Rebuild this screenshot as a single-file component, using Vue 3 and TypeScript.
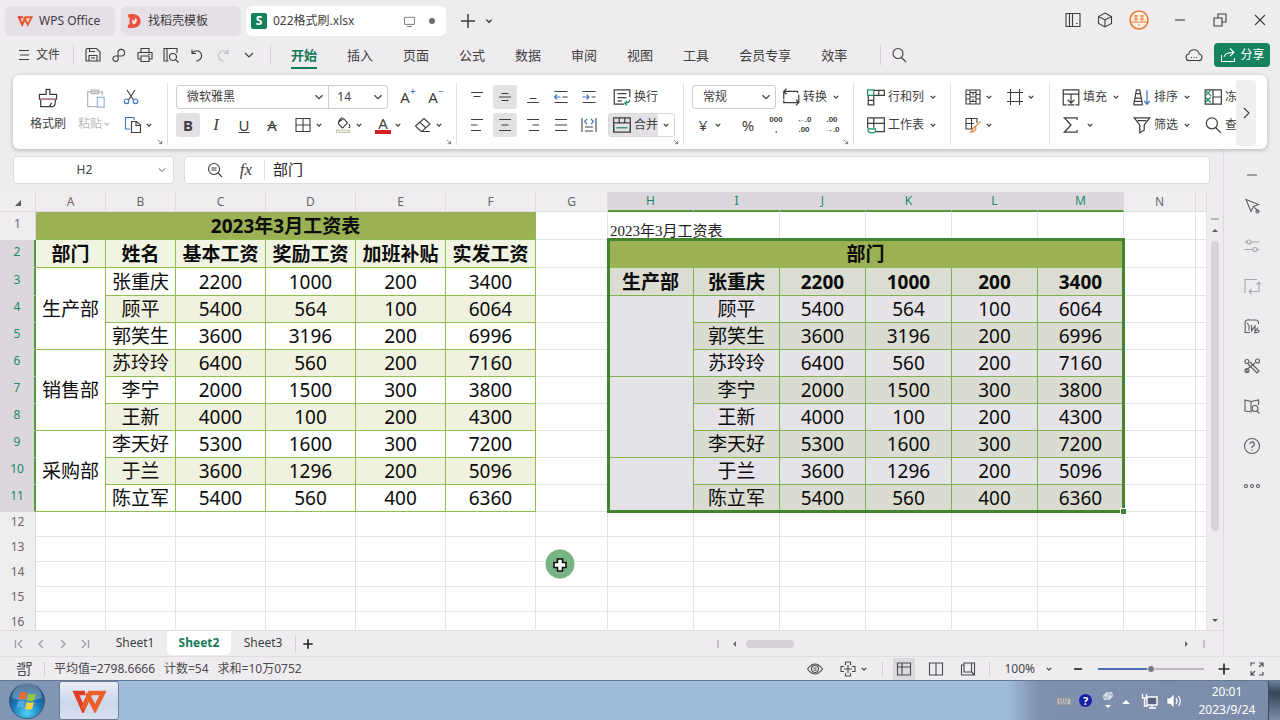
<script setup lang="ts">
import { h, ref } from 'vue'

type Shape = [d: string, stroke?: string, fill?: string]

const BLUE = '#3f74c4'
const TEAL = '#1b8a68'
const ORANGE = '#e08a45'

const icons: Record<string, Shape[]> = {
  menu: [['M4 4.500H14M5 9H14M4 13.500H14']],
  save: [['M2 3.500V15H16V6L12.500 2.500H3.500Q2 2.500 2 4M5 15V9.500H13V15M5.500 2.500V5.500H11M7 12H11']],
  export: [['M8 10H11.500A3.300 3.300 0 1 0 8 6.500V11.500A2.700 2.700 0 1 1 5.200 10H8']],
  print: [['M5 6V2.500H13V6M4.500 13H2V6.500H16V13H13.500M5 10H13V15.500H5ZM12 8.200H14']],
  preview: [['M6.500 15H2V2.500H15V7M2 2.500H5V15'], ['M11 7.500A3.500 3.500 0 1 0 11 14.500A3.500 3.500 0 1 0 11 7.500M13.500 13.500L16.500 16.500']],
  undo: [['M4 3.500V7.500H8M4.300 7.200A5 5 0 1 1 10 14.500L8.500 15.500']],
  redo: [['M14 3.500V7.500H10M13.700 7.200A5 5 0 1 0 8 14.500L9.500 15.500']],
  down: [['M5 7L9 11L13 7']],
  search: [['M8 2.500A5 5 0 1 0 8 12.500A5 5 0 1 0 8 2.500M11.500 11.500L16 16']],
  cloud: [['M5 14.500A3.300 3.300 0 0 1 3.800 8A5.300 5.300 0 0 1 14.200 8A3.300 3.300 0 0 1 13 14.500ZM6 11.500H7M8.600 11.500H9.600M11.200 11.500H12.200']],
  share: [['M2.500 9V15.500H15.500V12M5 11Q6 6.500 14 6.500M11 2.500L15 6.500L11 10.200']],
  monitor: [['M3 4H15V12.500H3ZM6 15H12']],
  plus: [['M2 9H16M9 2V16']],
  columns: [['M8.500 2.500H2V15.500H8.500M5.500 2.500V15.500M8.500 2.500H16V15.500H8.500ZM12 12.500H13.500']],
  cube: [['M9 2L15.500 5.500V12.500L9 16L2.500 12.500V5.500ZM2.500 5.500L9 9L15.500 5.500M9 9V16']],
  minimize: [['M4 9H14']],
  restore: [['M3 7H11V15H3ZM7 7V3H15V11H11']],
  close: [['M4 4L14 14M14 4L4 14']],
  brush: [['M7.500 6V2H10.500V6H16V10H2V6ZM3 10V16H13Q15.500 15 15 10M10 16L12 13'], ['M2.500 9.800H15.500', '#d39a9a']],
  paste: [['M11 16H3V4H15V7M6 2.500H12V5.500H6Z'], ['M11 8.500H16.500V16.500H11Z', '#9db4d6']],
  cut: [['M5 2L11.500 12M13 2L6.500 12'], ['M4.500 11A2.300 2.300 0 1 0 4.500 15.600A2.300 2.300 0 1 0 4.500 11M13.500 11A2.300 2.300 0 1 0 13.500 15.600A2.300 2.300 0 1 0 13.500 11', BLUE]],
  copy: [['M6 13H1.500V1.500H10V4', BLUE], ['M7.500 5.500H12.500L16.500 9V16.500H7.500ZM12 6V9.500H16']],
  borders: [['M2 2.500H16V15.500H2ZM9 2.500V15.500M2 9H16']],
  fill: [['M5 6L9.500 2.500L13.500 7L8.500 12L4.500 8Q4 4.500 8 1.500M15 8Q17 12 14.500 11.500'], ['M2.500 14H15.500V16.500H2.500Z', '#c9c6ae', '#efeedd']],
  eraser: [['M1.500 10L10 2.500L16 8L8.500 15H6.500ZM6 6.300L12 12M7 15.500H16']],
  valignTop: [['M3 4.500H15M5.500 8.500H12.500']],
  valignMid: [['M5.500 5.500H12.500M3 9H15M5.500 12.500H12.500']],
  valignBot: [['M5.500 10.500H12.500M3 14.500H15']],
  outdent: [['M2.500 3.500H15.500M10.500 9H15.500M2.500 14.500H15.500'], ['M2.500 9H8.500M5 6.500L2.500 9L5 11.500', BLUE]],
  indent: [['M2.500 3.500H15.500M11.500 9H15.500M2.500 14.500H15.500'], ['M2.500 9H9M6.500 6.500L9 9L6.500 11.500', BLUE]],
  left: [['M3 3.500H15M3 9H9.500M3 14.500H13']],
  center: [['M3 3.500H15M5.500 9H12.500M3 14.500H15']],
  right: [['M3 3.500H15M8.500 9H15M5 14.500H15']],
  justify: [['M3 3.500H15M3 9H15M3 14.500H15']],
  spread: [['M2 2V16M16 2V16M5 11H13M5 15H13'], ['M7 3L4.500 5.500L7 8M11 3L13.500 5.500L11 8', BLUE]],
  wrap: [['M11 15.500H2V2.500H16V9M5 6H13M5 9.500H13M5 12.500H9'], ['M16 11.500Q16 14.500 11.500 14.500M13.500 12.500L11.500 14.500L13.500 16.500', TEAL]],
  merge: [['M1.500 2.500H16.500V15.500H1.500ZM1.500 7H16.500M6.500 2.500V7M11.500 2.500V7'], ['M4 11.500H14', TEAL], ['M1.500 15.500V9M16.500 15.500V9']],
  convert: [['M2.500 11V4H15M5 1.500L2.500 4L5 6.500M16 7V14H3.500M13.500 11.500L16 14L13.500 16.500M2.500 12V14H5M15 4V5.500']],
  rowcol: [['M7 3H16.500V7.500H7M11.500 3V7.500'], ['M2 7.500V16H7V7.500M2 12H7'], ['M1.500 2.500H7V7.500H1.500Z', TEAL]],
  sheet: [['M1.500 2.500H16.500V15H9M1.500 2.500V12M1.500 7.500H16.500M7 2.500V11.500'], ['M2 12.500H8.500V15Q5.500 17 2 15Z', TEAL]],
  cells: [['M2 2H16V16H2ZM6 2V16M12 2V16M2 6.500H6M2 11H6M12 6.500H16M12 11H16M6 4.500H12M6 13.500H12M9 4.500V7M9 11V13.500M6 9H12']],
  frame: [['M4.500 1V17M13.500 1V17M1 4.500H17M1 13.500H17']],
  format: [['M9 13H2V2.500H13V7M2 7.500H10M7.500 2.500V13'], ['M16.500 5.500L10.500 11.500', ORANGE], ['M10 11Q13 11 11.500 14Q10 16.500 6.500 16Q9 14.500 8.500 13Q8.500 11.500 10 11', ORANGE, '#f6cda6']],
  fillDown: [['M5 16H2V2.500H16V16H13M2 6.500H16M9 6.500V14M6 11.500L9 14.500L12 11.500M6 16H12']],
  sort: [['M1.500 16L4 2.500H7L9.500 16M3 10H8M1.500 16H9.500M4 6H7.500M2.500 13H8.500'], ['M13.500 3V15M11 12.500L13.500 15.500L16 12.500', BLUE]],
  sigma: [['M14.500 4.500V2.500H3L9 9L3 15.500H14.500V13.500']],
  funnel: [['M2 2.500H16L11 9V13.500L7 16V9ZM5 5H13']],
  freeze: [['M2 2.500H16.500V15.500H2ZM9 2.500V15.500M9 9H16.500'], ['M2 3L7 8M2 9L7 14M7 3L2 8M7 9L2 14', TEAL]],
  chevR: [['M7 4L12 9L7 14']],
  zoomOut: [['M8 2.500A5.500 5.500 0 1 0 8 13.500A5.500 5.500 0 1 0 8 2.500M12 12L16 16M5.500 7H10.500M5.500 9H10.500']],
  launcher: [['M5 5L12 12M12 7V12H7']],
  cursor: [['M3 2.500L15.500 7.500L10.500 9.500L8 14.500ZM11.500 10.500L15.500 14.500'], ['M14.500 13A1.500 1.500 0 1 0 14.500 16A1.500 1.500 0 1 0 14.500 13']],
  sliders: [['M1.500 5H4M8 5H16.500M1.500 12.500H10M14 12.500H16.500'], ['M6 3A2 2 0 1 0 6 7A2 2 0 1 0 6 3M12 10.500A2 2 0 1 0 12 14.500A2 2 0 1 0 12 10.500']],
  swap: [['M2 16V2.500H14M16 5V14.500H6M8.500 12L6 14.500L8.500 17M13.500 7.500L16 5L18 7.500']],
  chart: [['M6 2.500Q1.500 3 2 7Q2.500 9 2 15.500H7M4 6L6 8.500V13.500M5 3H13Q16 3.500 15.500 7'], ['M8.500 8V14L12 9V14.500L15 10.500M11 16L16 15M13.500 12L16.500 14.500']],
  tools: [['M5 7L14 16L16 14L7 5M12 6L3 13L5 15'], ['M4 2.500A2 2 0 1 0 4 6.500A2 2 0 1 0 4 2.500M14.500 2A2 2 0 1 0 14.500 6A2 2 0 1 0 14.500 2M4 11.500A2 2 0 1 0 4 15.500A2 2 0 1 0 4 11.500']],
  manual: [['M9 15L2 14V3L8 4.500L15.500 3V8M8 4.500V14'], ['M12 8.500A3 3 0 1 0 12 14.500A3 3 0 1 0 12 8.500M14 14L16.500 16.500']],
  help: [['M9 1.500A7.500 7.500 0 1 0 9 16.500A7.500 7.500 0 1 0 9 1.500M6.700 7A2.300 2.300 0 1 1 9 9.500V11M9 12.500V13.800']],
  dots: [['M3 7.500A1.500 1.500 0 1 0 3 10.500A1.500 1.500 0 1 0 3 7.500M9 7.500A1.500 1.500 0 1 0 9 10.500A1.500 1.500 0 1 0 9 7.500M15 7.500A1.500 1.500 0 1 0 15 10.500A1.500 1.500 0 1 0 15 7.500']],
  first: [['M4.500 4V14M13 4L8 9L13 14']],
  prev: [['M11.500 4L6.500 9L11.500 14']],
  next: [['M6.500 4L11.500 9L6.500 14']],
  last: [['M5 4L10 9L5 14M13.500 4V14']],
  record: [['M3 3.500H5V6.500H2M10 3H7V5H9.500V7H6.500M12 8V2.500H16V5.500H12M14 5.500V15.500H12M2 9H10M4 11.500H10V15.500H4Z']],
  eye: [['M1.500 9Q9 -1 16.500 9Q9 19 1.500 9ZM9 5.500A3.500 3.500 0 1 0 9 12.500A3.500 3.500 0 1 0 9 5.500M7.500 8H10.500M7.500 10H10.500']],
  move: [['M6.500 5V2H11.500V5M6.500 13V16H11.500V13M5 6.500H2V11.500H5M13 6.500H16V11.500H13M9 5V13M5 9H13']],
  normal: [['M2.500 3H15.500V15H2.500ZM2.500 7H15.500M7 3V15']],
  page: [['M2.500 3H15.500V15H2.500ZM9 3V15']],
  reading: [['M5 3H12.500V12H5ZM5 5H2.500V15H15.500V3H12.500M12.500 12L15 14.500']],
  expand: [['M11 3H15V7M15 3L11 7M7 3H3V6M3 11V15H7M3 15L7 11M11 15H15V12']],
}

const Icon = (props: { n: string }) =>
  h(
    'svg',
    { class: 'icon', viewBox: '0 0 18 18', 'aria-hidden': 'true' },
    icons[props.n].map(([d, stroke, fill]) => h('path', { d, stroke: stroke ?? 'currentColor', fill: fill ?? 'none' })),
  )
Icon.props = ['n']

const quick = [
  ['save', '保存'], ['export', '输出'], ['print', '打印'], ['preview', '打印预览'],
  ['undo', '撤销'], ['redo', '恢复'], ['down', '更多'],
]
const menus = ['开始', '插入', '页面', '公式', '数据', '审阅', '视图', '工具', '会员专享', '效率']
const side = ['cursor', 'sliders', 'swap', 'chart', 'tools', 'manual', 'help', 'dots']
const sheets = ['Sheet1', 'Sheet2', 'Sheet3']
const sheetNav = ['first', 'prev', 'next', 'last']
const activeSheet = ref('Sheet2')
const formula = ref('部门')
const address = ref('H2')
const zoomLevel = ref(100)

const columns = 'ABCDEFGHIJKLMN'.split('')
const isPicked = (c: string) => c >= 'H' && c <= 'M'

interface Cell { text?: string; cls?: string; cols?: number; rows?: number }

const people = [
  ['生产部', '张重庆', '2200', '1000', '200', '3400'],
  ['', '顾平', '5400', '564', '100', '6064'],
  ['', '郭笑生', '3600', '3196', '200', '6996'],
  ['销售部', '苏玲玲', '6400', '560', '200', '7160'],
  ['', '李宁', '2000', '1500', '300', '3800'],
  ['', '王新', '4000', '100', '200', '4300'],
  ['采购部', '李天好', '5300', '1600', '300', '7200'],
  ['', '于兰', '3600', '1296', '200', '5096'],
  ['', '陈立军', '5400', '560', '400', '6360'],
]
const mergedH: Record<number, number> = { 1: 3, 4: 3, 7: 2 }
const blanks = (n: number): Cell[] => Array.from({ length: n }, () => ({}))

const rows: Cell[][] = [
  [{ text: '2023年3月工资表', cls: 'data title', cols: 6 }, {}, { text: '2023年3月工资表', cls: 'plain', cols: 2 }, ...blanks(6)],
  [
    ...['部门', '姓名', '基本工资', '奖励工资', '加班补贴', '实发工资'].map((text) => ({ text, cls: 'data head' })),
    {}, { text: '部门', cls: 'data title', cols: 6 }, ...blanks(2),
  ],
  ...people.map((p, i) => {
    const line: Cell[] = []
    if (p[0]) line.push({ text: p[0], cls: 'data', rows: 3 })
    p.slice(1).forEach((text) => line.push({ text, cls: i % 2 ? 'data band' : 'data' }))
    line.push({})
    if (i === 0) line.push({ text: p[0], cls: 'data sel selhead' })
    if (mergedH[i]) line.push({ cls: 'data sel', rows: mergedH[i] })
    p.slice(1).forEach((text) =>
      line.push({ text, cls: 'data sel' + (i === 0 ? ' selhead' : i % 2 ? '' : ' selband') }))
    return [...line, ...blanks(2)]
  }),
  ...Array.from({ length: 5 }, () => blanks(15)),
]
const rowClass = (n: number) => (n > 11 ? 'short' : n < 4 ? 'tall' : 'mid')
</script>

<template>
  <div class="desktop">
    <header class="titlebar">
      <button class="doc-tab home">
        <svg class="logo" viewBox="0 0 34 24" aria-hidden="true">
          <path d="M13 4H4L11 20L18 4" fill="none" stroke="#dd3e25" stroke-width="4" />
          <path d="M15 4L23 20L31 4H18L11 20" fill="none" stroke="#ea5a2c" stroke-width="4" />
        </svg>
        <span>WPS Office</span>
      </button>
      <button class="doc-tab store">
        <svg class="logo" viewBox="0 0 18 18" aria-hidden="true">
          <path d="M3 1H8Q16.500 2 16.500 9T8 17H2V14L4 12V6L2 4Z" fill="#e8523f" />
          <path d="M9 13Q6 11 7 7L9 9L11 5Q14 10 9 13" fill="#ffe6dc" />
        </svg>
        <span>找稻壳模板</span>
      </button>
      <button class="doc-tab current">
        <span class="s-logo">S</span>
        <span class="doc-name">022格式刷.xlsx</span>
        <Icon n="monitor" /><i class="unsaved"></i>
      </button>
      <button class="bare add" aria-label="新建"><Icon n="plus" /></button>
      <button class="bare more" aria-label="标签列表"><Icon n="down" /></button>
      <div class="win">
        <button class="bare w32" aria-label="分屏"><Icon n="columns" /></button>
        <button class="bare w32" aria-label="应用"><Icon n="cube" /></button>
        <button class="bare w32 avatar" aria-label="账号">
          <svg viewBox="0 0 20 20" aria-hidden="true">
            <circle cx="10" cy="10" r="9" fill="#fff1e4" stroke="#ea7a35" stroke-width="1.500" />
            <path d="M1 12H19" stroke="#ea7a35" /><path d="M5 6H9M5 9H9M7 5V11M11 6H15M11 9H15M13 5V11M9 15H11" stroke="#ea7a35" />
          </svg>
        </button>
        <button class="bare w40" aria-label="最小化"><Icon n="minimize" /></button>
        <button class="bare w40" aria-label="还原"><Icon n="restore" /></button>
        <button class="bare w40" aria-label="关闭"><Icon n="close" /></button>
      </div>
    </header>

    <nav class="menubar">
      <button class="bare file"><Icon n="menu" /><span>文件</span></button>
      <i class="rule"></i>
      <div class="quick">
        <button v-for="q in quick" :key="q[0]" class="bare" :class="q[0]" :aria-label="q[1]"><Icon :n="q[0]" /></button>
      </div>
      <i class="rule"></i>
      <div class="menus">
        <button v-for="m in menus" :key="m" class="bare" :class="{ on: m === '开始' }"><span>{{ m }}</span></button>
      </div>
      <i class="rule"></i>
      <button class="bare find" aria-label="搜索"><Icon n="search" /></button>
      <button class="bare cloud" aria-label="云同步"><Icon n="cloud" /></button>
      <button class="share"><Icon n="share" /><span>分享</span></button>
    </nav>

    <section class="ribbon">
      <div class="group clip">
        <button class="big"><Icon n="brush" /><span>格式刷</span></button>
        <button class="big faded"><Icon n="paste" /><span>粘贴<Icon n="down" class="chev" /></span></button>
        <div class="lines">
          <div class="line"><button class="tool" aria-label="剪切"><Icon n="cut" /></button></div>
          <div class="line"><button class="tool split" aria-label="复制"><Icon n="copy" /><Icon n="down" class="chev" /></button></div>
        </div>
        <Icon n="launcher" class="launch" />
      </div>
      <div class="group font">
        <div class="line">
          <label class="pick family"><select aria-label="字体"><option>微软雅黑</option></select><Icon n="down" class="chev" /></label>
          <label class="pick size"><select aria-label="字号"><option>14</option></select><Icon n="down" class="chev" /></label>
          <button class="tool letter" aria-label="增大字号">A<sup>+</sup></button>
          <button class="tool letter" aria-label="减小字号">A<sup>−</sup></button>
        </div>
        <div class="line">
          <button class="tool letter on"><b>B</b></button>
          <button class="tool letter"><i class="ital">I</i></button>
          <button class="tool letter"><u>U</u></button>
          <button class="tool letter"><s>A</s></button>
          <span class="splits">
            <button class="tool split" aria-label="边框"><Icon n="borders" /><Icon n="down" class="chev" /></button>
            <button class="tool split" aria-label="填充颜色"><Icon n="fill" /><Icon n="down" class="chev" /></button>
            <button class="tool split letter"><span class="ink">A</span><Icon n="down" class="chev" /></button>
            <button class="tool split" aria-label="清除"><Icon n="eraser" /><Icon n="down" class="chev" /></button>
          </span>
        </div>
        <Icon n="launcher" class="launch" />
      </div>
      <div class="group align">
        <div class="line">
          <button class="tool" aria-label="顶端对齐"><Icon n="valignTop" /></button>
          <button class="tool on" aria-label="垂直居中"><Icon n="valignMid" /></button>
          <button class="tool" aria-label="底端对齐"><Icon n="valignBot" /></button>
          <button class="tool" aria-label="减少缩进"><Icon n="outdent" /></button>
          <button class="tool" aria-label="增加缩进"><Icon n="indent" /></button>
          <button class="tool text lead"><Icon n="wrap" />换行</button>
        </div>
        <div class="line">
          <button class="tool" aria-label="左对齐"><Icon n="left" /></button>
          <button class="tool on" aria-label="水平居中"><Icon n="center" /></button>
          <button class="tool" aria-label="右对齐"><Icon n="right" /></button>
          <button class="tool" aria-label="两端对齐"><Icon n="justify" /></button>
          <button class="tool" aria-label="分散对齐"><Icon n="spread" /></button>
          <span class="combo lead">
            <button class="tool text"><Icon n="merge" />合并</button>
            <button class="drop" aria-label="合并选项"><Icon n="down" class="chev" /></button>
          </span>
        </div>
        <Icon n="launcher" class="launch" />
      </div>
      <div class="group number">
        <div class="line">
          <label class="pick kind"><select aria-label="数字格式"><option>常规</option></select><Icon n="down" class="chev" /></label>
          <button class="tool text"><Icon n="convert" />转换<Icon n="down" class="chev" /></button>
        </div>
        <div class="line">
          <button class="tool split letter cur">¥<Icon n="down" class="chev" /></button>
          <button class="tool letter">%</button>
          <button class="tool digits"><span>000</span><span>,</span></button>
          <button class="tool digits"><span>←.0</span><span>.00</span></button>
          <button class="tool digits"><span>.00</span><span>→.0</span></button>
        </div>
        <Icon n="launcher" class="launch" />
      </div>
      <div class="group rc">
        <div class="line"><button class="tool text"><Icon n="rowcol" />行和列<Icon n="down" class="chev" /></button></div>
        <div class="line"><button class="tool text"><Icon n="sheet" />工作表<Icon n="down" class="chev" /></button></div>
      </div>
      <div class="group cellsg">
        <div class="line">
          <button class="tool split" aria-label="单元格"><Icon n="cells" /><Icon n="down" class="chev" /></button>
          <button class="tool split" aria-label="框"><Icon n="frame" /><Icon n="down" class="chev" /></button>
        </div>
        <div class="line"><button class="tool split" aria-label="样式"><Icon n="format" /><Icon n="down" class="chev" /></button></div>
      </div>
      <div class="group edit">
        <div class="line">
          <button class="tool text"><Icon n="fillDown" />填充<Icon n="down" class="chev" /></button>
          <button class="tool text"><Icon n="sort" />排序<Icon n="down" class="chev" /></button>
          <button class="tool text"><Icon n="freeze" />冻</button>
        </div>
        <div class="line">
          <button class="tool text" aria-label="求和"><Icon n="sigma" /><Icon n="down" class="chev" /></button>
          <button class="tool text"><Icon n="funnel" />筛选<Icon n="down" class="chev" /></button>
          <button class="tool text"><Icon n="search" />查</button>
        </div>
      </div>
      <button class="scroller" aria-label="更多功能"><Icon n="chevR" /></button>
    </section>

    <div class="work">
      <main class="book">
        <div class="formula-row">
          <label class="namebox"><input v-model="address" aria-label="名称框" /><Icon n="down" /></label>
          <div class="fbox">
            <button class="bare" aria-label="缩小"><Icon n="zoomOut" /></button>
            <button class="bare fx"><i>fx</i></button>
            <input v-model="formula" aria-label="编辑栏" />
          </div>
        </div>

        <div class="grid-row">
          <div class="grid">
            <table>
              <colgroup>
                <col class="c-num" /><col class="c-70" /><col class="c-70" />
                <col class="c-90" /><col class="c-90" /><col class="c-90" /><col class="c-90" />
                <col class="c-72" /><col v-for="n in 6" :key="n" class="c-86" /><col class="c-72" /><col />
              </colgroup>
              <thead>
                <tr>
                  <th class="corner"><i></i></th>
                  <th v-for="c in columns" :key="c" scope="col" :class="{ picked: isPicked(c) }">{{ c }}</th>
                  <th></th>
                </tr>
              </thead>
              <tbody>
                <tr v-for="(r, i) in rows" :key="i" :class="rowClass(i + 1)">
                  <th scope="row" :class="{ picked: i > 0 && i < 11 }">{{ i + 1 }}</th>
                  <td v-for="(c, j) in r" :key="j" :class="c.cls" :colspan="c.cols" :rowspan="c.rows">{{ c.text }}</td>
                </tr>
              </tbody>
            </table>
            <div class="selection"><i></i></div>
            <svg class="pointer" viewBox="0 0 30 30" aria-hidden="true">
              <circle cx="15" cy="15" r="14.500" fill="#78b383" />
              <path d="M12.500 10H17.500V13.500H21V18.500H17.500V22H12.500V18.500H9V13.500H12.500Z" fill="#fff" stroke="#111" stroke-width="1.600" />
            </svg>
          </div>
          <div class="vscroll"><i class="grip"></i><i class="up"></i><i class="thumb"></i><i class="dn"></i></div>
        </div>

        <div class="sheetbar">
          <div class="nav">
            <button v-for="n in sheetNav" :key="n" class="bare" :aria-label="n"><Icon :n="n" /></button>
          </div>
          <button v-for="s in sheets" :key="s" class="sheet" :class="{ on: s === activeSheet }" @click="activeSheet = s">{{ s }}</button>
          <i class="rule"></i>
          <button class="bare addsheet" aria-label="新建工作表"><Icon n="plus" /></button>
          <div class="hscroll"><i class="split-mark"></i><i class="lt"></i><i class="thumb"></i><i class="rt"></i><i class="split-mark"></i></div>
        </div>
      </main>

      <aside class="side">
        <button class="bare collapse" aria-label="收起"><Icon n="minimize" /></button>
        <button v-for="s in side" :key="s" class="bare" :class="s" :aria-label="s"><Icon :n="s" /></button>
      </aside>
    </div>

    <footer class="status">
      <button class="bare rec" aria-label="录制"><Icon n="record" /></button>
      <i class="rule"></i>
      <span>平均值=2798.6666</span><span>计数=54</span><span>求和=10万0752</span>
      <div class="views">
        <button class="bare w32" aria-label="护眼"><Icon n="eye" /></button>
        <button class="bare w40 mv" aria-label="阅读布局"><Icon n="move" /><Icon n="down" class="chev" /></button>
        <i class="rule"></i>
        <button class="bare view on" aria-label="普通视图"><Icon n="normal" /></button>
        <button class="bare view" aria-label="分页预览"><Icon n="page" /></button>
        <button class="bare view" aria-label="阅读模式"><Icon n="reading" /></button>
        <i class="rule"></i>
        <button class="bare pct">{{ zoomLevel }}%<Icon n="down" class="chev" /></button>
        <button class="bare zm" aria-label="缩小比例"><Icon n="minimize" /></button>
        <input v-model.number="zoomLevel" class="zoom" type="range" min="0" max="200" aria-label="显示比例" />
        <button class="bare zm" aria-label="放大比例"><Icon n="plus" /></button>
        <button class="bare full" aria-label="全屏"><Icon n="expand" /></button>
      </div>
    </footer>

    <footer class="taskbar">
      <button class="start" aria-label="开始菜单">
        <svg viewBox="0 0 36 36" aria-hidden="true">
          <defs>
            <radialGradient id="orb" cx="50%" cy="85%" r="85%">
              <stop offset="0" stop-color="#4fd3f5" /><stop offset=".5" stop-color="#1c77b8" /><stop offset="1" stop-color="#1d426e" />
            </radialGradient>
          </defs>
          <circle cx="18" cy="18" r="17.500" fill="url(#orb)" stroke="#3a5a80" />
          <path d="M3 15A15 15 0 0 1 33 15Q18 20 3 15" fill="#fff" opacity=".28" />
          <path d="M11 10Q14 8 18 10L16.500 17Q13 15 9.500 17Z" fill="#ee6a35" />
          <path d="M19.500 10.500Q23 12 27 10.500L25 17.500Q21 19 18 17.500Z" fill="#95c83d" />
          <path d="M9 18.500Q12.500 16.500 16 18.500L14.500 25Q11 23 7.500 25Z" fill="#4fa9e2" />
          <path d="M17.500 19Q21 20.500 25 19L23 26Q19 27.500 16 26Z" fill="#fbd341" />
        </svg>
      </button>
      <button class="task" aria-label="WPS">
        <svg viewBox="0 0 34 24" aria-hidden="true">
          <path d="M13 4H4L11 20L18 4" fill="none" stroke="#dd3e25" stroke-width="4.500" />
          <path d="M15 4L23 20L31 4H18L11 20" fill="none" stroke="#ec5f2b" stroke-width="4.500" />
        </svg>
      </button>
      <div class="tray">
        <svg class="t-kb" viewBox="0 0 16 16" aria-hidden="true"><path d="M1 5H15V12H1Z" fill="#b9bfca" stroke="#8f8a88" /><path d="M5 5Q5 2 8 3" fill="none" stroke="#8f8a88" /><path d="M3 7H13M3 9H13M4 11H12" stroke="#74706c" stroke-dasharray="1.500 1" /></svg>
        <span class="t-help">?</span>
        <svg class="t-sm" viewBox="0 0 12 18" aria-hidden="true"><path d="M4 1H10V5H4ZM2 3H8V7H2Z" fill="none" stroke="#fff" /><path d="M3 13H9L6 16Z" fill="#fff" /></svg>
        <svg class="t-sm" viewBox="0 0 12 18" aria-hidden="true"><path d="M2 12H10L6 8Z" fill="#fff" /></svg>
        <svg class="t-net" viewBox="0 0 18 18" aria-hidden="true"><path d="M6 5H16V13H6Z" fill="#56657c" stroke="#fff" stroke-width="1.400" /><path d="M8 16H15M11 13V16M3.500 7V14H7M1.500 2V6H5.500V2" fill="none" stroke="#fff" stroke-width="1.400" /></svg>
        <svg class="t-net" viewBox="0 0 18 18" aria-hidden="true"><path d="M2 6H5L9 2V16L5 12H2Z" fill="#fff" stroke="#5b6a82" stroke-width=".5" /><path d="M11 6Q13 9 11 12M13.500 4Q17 9 13.500 14" fill="none" stroke="#fff" stroke-width="1.200" /></svg>
        <div class="clock"><time>20:01</time><time>2023/9/24</time></div>
        <button class="peek" aria-label="显示桌面"></button>
      </div>
    </footer>
  </div>
</template>

<style>
html, body { margin: 0; background: #eeecee; }
</style>

<style scoped>
.desktop {
  height: 100vh; display: flex; flex-direction: column; overflow: hidden;
  background: #eeecee; color: #3f3d40;
  font: 12px/16px "Noto Sans", "Noto Sans CJK SC", sans-serif;
}
.desktop * { box-sizing: border-box; }
button, input, select { font: inherit; color: inherit; margin: 0; padding: 0; border: 0; background: none; outline: none; }
button { display: flex; align-items: center; justify-content: center; white-space: nowrap; flex: none; }
.icon { width: 18px; height: 18px; stroke-width: 1.1; flex: none; display: block; }
.chev { width: 10px; height: 10px; stroke-width: 2.4; }
.rule { width: 1px; height: 20px; background: #d2ced3; flex: none; }
.w32 { width: 32px; }
.w40 { width: 40px; }

/* title bar */
.titlebar { display: flex; height: 40px; padding: 6px 0 4px 5px; flex: none; }
.doc-tab { height: 30px; border-radius: 6px; background: #e5dfe6; justify-content: flex-start; gap: 6px; padding-left: 12px; margin-right: 6px; }
.home { width: 110px; }
.store { width: 120px; padding-left: 5px; }
.current { width: 200px; background: #fff; padding: 0 10px 0 5px; margin-left: -1px; }
.logo { width: 16px; height: 16px; }
.s-logo { width: 16px; height: 16px; border-radius: 2px; background: #12805c; color: #fff; font-weight: bold; line-height: 16px; }
.doc-name { flex: 1; text-align: left; }
.current .icon { width: 15px; height: 15px; color: #77747a; }
.unsaved { width: 6px; height: 6px; border-radius: 3px; background: #6d6a70; margin: 0 1px 0 6px; }
.add { width: 32px; }
.add .icon { stroke-width: 1.5; }
.more { width: 10px; }
.more .icon { width: 12px; stroke-width: 2; }
.win { margin-left: auto; display: flex; margin-top: -2px; }
.avatar { margin: 0 5px 0 2px; }
.avatar svg { width: 20px; height: 20px; fill: none; }

/* menu bar */
.menubar { display: flex; height: 32px; align-items: center; padding: 0 10px 2px 15px; flex: none; }
.file { gap: 3px; width: 58px; justify-content: flex-start; }
.quick { display: flex; margin: 0 8px 0 6px; }
.quick button { width: 26px; }
.redo { color: #c2bfc4; }
.menus { display: flex; font-size: 13px; align-self: stretch; margin: 0 18px 0 5px; }
.menus button { padding: 2px 15px 0; }
.menus span { padding: 4px 0; border-bottom: 2px solid transparent; }
.menus .on { color: #137a58; font-weight: bold; }
.menus .on span { border-color: #137a58; }
.find { margin-left: 9px; }
.cloud { margin-left: auto; margin-right: 11px; }
.share { width: 56px; height: 24px; gap: 3px; border-radius: 4px; background: #15835f; color: #fff; }

/* ribbon */
.ribbon { display: flex; height: 74px; margin: 3px 13px 0; padding-top: 8px; background: #fff; border-radius: 6px; box-shadow: 0 1px 4px #b5b0b8; flex: none; position: relative; z-index: 1; }
.group { position: relative; padding: 0 8px; height: 62px; display: flex; flex-direction: column; border-right: 1px solid #e2dfe3; flex: none; }
.line { display: flex; align-items: center; gap: 4px; height: 28px; }
.launch { position: absolute; right: 2px; bottom: -2px; width: 10px; height: 10px; }
.tool { width: 24px; height: 24px; border-radius: 3px; }
.tool.on { background: #e4e1e5; }
.tool.split { width: 40px; gap: 1px; }
.tool.split .chev { margin-left: 1px; }
.tool.text { width: auto; gap: 2px; }
.tool.text .chev { margin-left: 2px; }
.tool.text .icon:not(.chev) { width: 20px; height: 20px; }
.letter { font-size: 15px; line-height: 18px; }
.letter sup { font-size: 10px; line-height: 8px; align-self: flex-start; color: #3f74c4; margin-top: 2px; }
.ital { font-family: "Liberation Serif", serif; font-size: 17px; }
.ink { border-bottom: 4px solid #d3201c; line-height: 14px; width: 16px; text-align: center; }
.digits { flex-direction: column; font: bold 8px/10px "Liberation Sans", "DejaVu Sans", sans-serif; }
.clip { width: 155px; flex-direction: row; padding: 0; }
.big { flex-direction: column; justify-content: flex-start; gap: 7px; width: 48px; padding-top: 4px; margin-left: 11px; }
.big + .big { margin-left: 0; width: 46px; }
.big .icon { width: 22px; height: 22px; stroke-width: 1; }
.big span { display: flex; align-items: center; }
.big .chev { width: 10px; height: 10px; stroke-width: 2; }
.faded { color: #b9b6bb; }
.clip .lines { margin-left: 1px; }
.clip .tool.split { width: 40px; }
.font { width: 289px; }
.splits { display: flex; margin-left: 1px; }
.pick { position: relative; height: 24px; border: 1px solid #d0ccd2; display: block; }
.pick select { appearance: none; width: 100%; height: 22px; padding: 0 10px; }
.pick .chev { position: absolute; right: 1px; top: 3px; width: 16px; height: 16px; stroke-width: 1.3; pointer-events: none; }
.family { width: 154px; border-radius: 3px 0 0 3px; }
.size { width: 60px; margin-left: -5px; margin-right: 4px; border-radius: 0 3px 3px 0; }
.size select { padding-left: 8px; }
.align { width: 227px; }
.lead { margin-left: 4px; }
.tool.text.lead { padding-left: 3px; }
.combo { display: flex; height: 24px; border: 1px solid #dad6dc; border-radius: 3px; margin-left: 3px; }
.combo .tool { height: 22px; background: #e4e1e5; padding: 0 0 0 3px; border-radius: 0; }
.drop { width: 16px; }
.number { width: 170px; }
.kind { width: 84px; border-radius: 3px; margin-right: 1px; }
.cur { margin-right: 4px; padding-left: 2px; }
.number .tool.split { width: 36px; gap: 5px; }
.rc { width: 97px; padding: 0 12px; }
.cellsg { width: 99px; padding: 0 9px; }
.cellsg .tool.split { width: 38px; }
.edit { flex: 1 1 0; min-width: 0; overflow: hidden; border: 0; padding: 0 0 0 11px; }
.edit .line { gap: 0; }
.edit .tool { width: 71px; justify-content: flex-start; flex: none; }
.edit .tool.text { width: 71px; }
.scroller { width: 20px; height: 66px; margin: -3px 11px 0 0; background: #f0eef0; border-radius: 4px; }

/* workbook */
.work { flex: 1 1 0; min-height: 0; display: flex; }
.book { flex: 1 1 0; min-width: 0; display: flex; flex-direction: column; padding-top: 7px; }
.formula-row { display: flex; gap: 10px; padding: 0 13px 8px; flex: none; }
.namebox, .fbox { display: flex; align-items: center; height: 28px; background: #fff; border: 1px solid #dfdbe0; border-radius: 4px; }
.namebox { width: 161px; padding-right: 4px; }
.namebox input { width: 100%; min-width: 0; text-align: center; }
.namebox .icon { width: 14px; }
.fbox { flex: 1; padding-left: 16px; }
.fbox .bare { width: 28px; }
.fx { font: italic 17px/20px "Liberation Serif", serif; margin-left: 3px; }
.fbox input { flex: 1; min-width: 0; height: 20px; padding: 0 0 4px 8px; margin-left: 4px; border-left: 1px solid #e2dfe3; font-size: 15px; color: #222; }
.grid-row { flex: 1 1 0; min-height: 0; display: flex; }
.grid { flex: 1 1 0; min-width: 0; overflow: hidden; position: relative; background: #fff; }
table { width: 100%; table-layout: fixed; border-collapse: separate; border-spacing: 0; }
.c-num { width: 36px; }
.c-70 { width: 70px; }
.c-72 { width: 72px; }
.c-86 { width: 86px; }
.c-90 { width: 90px; }
th, td { padding: 0; border: 0 solid #e6e2e7; border-width: 0 1px 1px 0; overflow: hidden; white-space: nowrap; text-align: center; }
th { background: #efedef; font-weight: normal; font-size: 12px; line-height: 16px; color: #6a676c; border-color: #dedade; }
thead th { height: 20px; }
thead th.picked { background: #dcd7dd; color: #1b8a68; border-bottom: 2px solid #55993f; border-right-color: #dcd7dd; }
tbody th { padding-bottom: 4px; border-bottom-color: #efedef; }
tbody th.picked { background: #dcd7dd; color: #1b8a68; border-right: 2px solid #569a3f; border-bottom-color: #dcd7dd; }
.corner i { display: block; margin: 3px 0 0 15px; width: 0; border: 3px solid transparent; border-right-color: #5f5c62; border-bottom-color: #5f5c62; }
.tall { height: 28px; }
.mid { height: 27px; }
.short { height: 25px; }
.data { font-size: 19px; line-height: 24px; color: #0c0c0c; border-color: #8fc04f; }
.title { background: #9bb153; font-weight: bold; }
.head { background: #f1f4e3; font-weight: bold; }
.band { background: #f0f1de; }
.sel { background: #e5e3e8; border-color: #7fb24c; }
.selband { background: #dadcd2; }
.selhead { background: #dbddd2; font-weight: bold; }
.plain { text-align: left; vertical-align: bottom; padding-left: 2px; font: 15px/16px "Liberation Serif", "Noto Sans CJK SC", serif; color: #222; }
.selection { position: absolute; left: 607px; top: 46px; width: 518px; height: 275px; border: 3px solid #43852f; pointer-events: none; }
.selection i { position: absolute; right: -4px; bottom: -4px; width: 6px; height: 6px; background: #43852f; border: 1px solid #fff; border-width: 1px 0 0 1px; }
.pointer { position: absolute; left: 545px; top: 357px; width: 30px; height: 30px; }
.vscroll { width: 16px; display: flex; flex-direction: column; align-items: center; padding-top: 26px; }
.vscroll i, .hscroll i { flex: none; }
.grip { width: 8px; height: 2px; background: #bdb9bf; }
.up, .dn { width: 0; border: 3px solid transparent; }
.up { border-bottom-color: #5c595f; margin: 6px 0 9px; }
.vscroll .thumb { width: 8px; height: 290px; border-radius: 4px; background: #d8d2da; }
.dn { border-top-color: #5c595f; margin: auto 0 5px; }
.sheetbar { display: flex; height: 26px; align-items: center; flex: none; border-top: 1px solid #dedade; }
.nav { display: flex; margin: 0 7px 0 8px; color: #a19ea4; }
.nav button { width: 22px; }
.nav .icon { width: 14px; stroke-width: 1.8; }
.sheet { width: 64px; height: 24px; margin-top: -1px; }
.sheet.on { background: #fff; color: #137a58; font-weight: bold; border-radius: 0 0 5px 5px; }
.sheetbar .rule { height: 16px; }
.addsheet { width: 24px; color: #222; }
.addsheet .icon { width: 12px; stroke-width: 2.4; }
.hscroll { flex: 1; display: flex; align-items: center; max-width: 488px; margin: 0 18px 0 auto; }
.split-mark { width: 2px; height: 8px; background: #c4c0c6; }
.lt, .rt { width: 0; border: 3px solid transparent; }
.lt { border-right-color: #6c696f; margin: 0 10px 0 11px; }
.rt { border-left-color: #6c696f; margin: 0 12px 0 auto; }
.hscroll .thumb { width: 48px; height: 8px; border-radius: 4px; background: #d5cfd7; }
.side { width: 57px; border-left: 1px solid #dcd8dd; display: flex; flex-direction: column; align-items: center; padding-top: 15px; flex: none; color: #5f5c62; }
.side button { width: 40px; height: 40px; }
.side .collapse { height: 22px; }
.side .collapse .icon { width: 24px; }
.side .sliders, .side .swap { color: #a9a6ac; }

/* status bar */
.status { display: flex; align-items: center; height: 24px; padding: 0 12px 0 8px; gap: 9px; border-top: 1px solid #e0dde1; flex: none; white-space: nowrap; color: #4b484e; }
.rec { width: 32px; margin-right: -5px; }
.status .rule { height: 14px; }
.views { margin-left: auto; display: flex; align-items: center; color: #4b484e; }
.mv { margin: 0 8px 0 3px; gap: 2px; }
.view { width: 22px; height: 22px; margin: 0 0 0 10px; }
.view + .rule { margin-left: 10px; }
.view.on { background: #dcd9dd; }
.pct { gap: 9px; margin: 0 12px 0 14px; }
.zm { width: 24px; color: #2d2b2f; }
.zm .icon { width: 14px; stroke-width: 2.2; }
.zoom { appearance: none; width: 106px; height: 12px; margin: 0 8px; background: linear-gradient(90deg, #4a6fb5 50%, #bdb9bf 50%) center / 100% 2px no-repeat; }
.zoom::-webkit-slider-thumb { appearance: none; width: 8px; height: 8px; border-radius: 4px; background: #77747d; border: 1px solid #eeecee; }
.full { width: 22px; margin-left: 10px; }

/* taskbar */
.taskbar { display: flex; height: 40px; border-top: 1px solid #667790; background: linear-gradient(90deg, #8195b5 0, #8195b5 60px, #a1bddd 118px, #a1bddd calc(100% - 275px), #7e90ae calc(100% - 240px), #7b8daa); flex: none; }
.start { width: 54px; margin-right: 5px; }
.start svg { width: 36px; height: 36px; }
.task { width: 60px; height: 39px; border: 1px solid #6e7f99; border-radius: 3px; background: linear-gradient(#e9edf6, #ccd6ea 55%, #d9dff0); }
.task svg { width: 34px; height: 24px; }
.tray { margin-left: auto; display: flex; align-items: center; color: #fff; }
.t-kb { width: 16px; height: 16px; margin-right: 6px; }
.t-help { width: 15px; height: 15px; border-radius: 8px; background: #1420a0; border: 1px solid #8f9bd0; line-height: 13px; text-align: center; font-weight: bold; font-size: 11px; margin-right: 9px; }
.t-sm { width: 12px; height: 18px; margin-right: 6px; }
.t-net { width: 18px; height: 18px; margin: 0 3px; }
.clock { width: 82px; text-align: center; line-height: 18px; }
.clock time { display: block; }
.peek { width: 12px; height: 39px; background: linear-gradient(#6d7e96, #34455c 30%, #7d8da6); border: 1px solid #3c4b62; border-width: 0 0 0 1px; }
</style>
